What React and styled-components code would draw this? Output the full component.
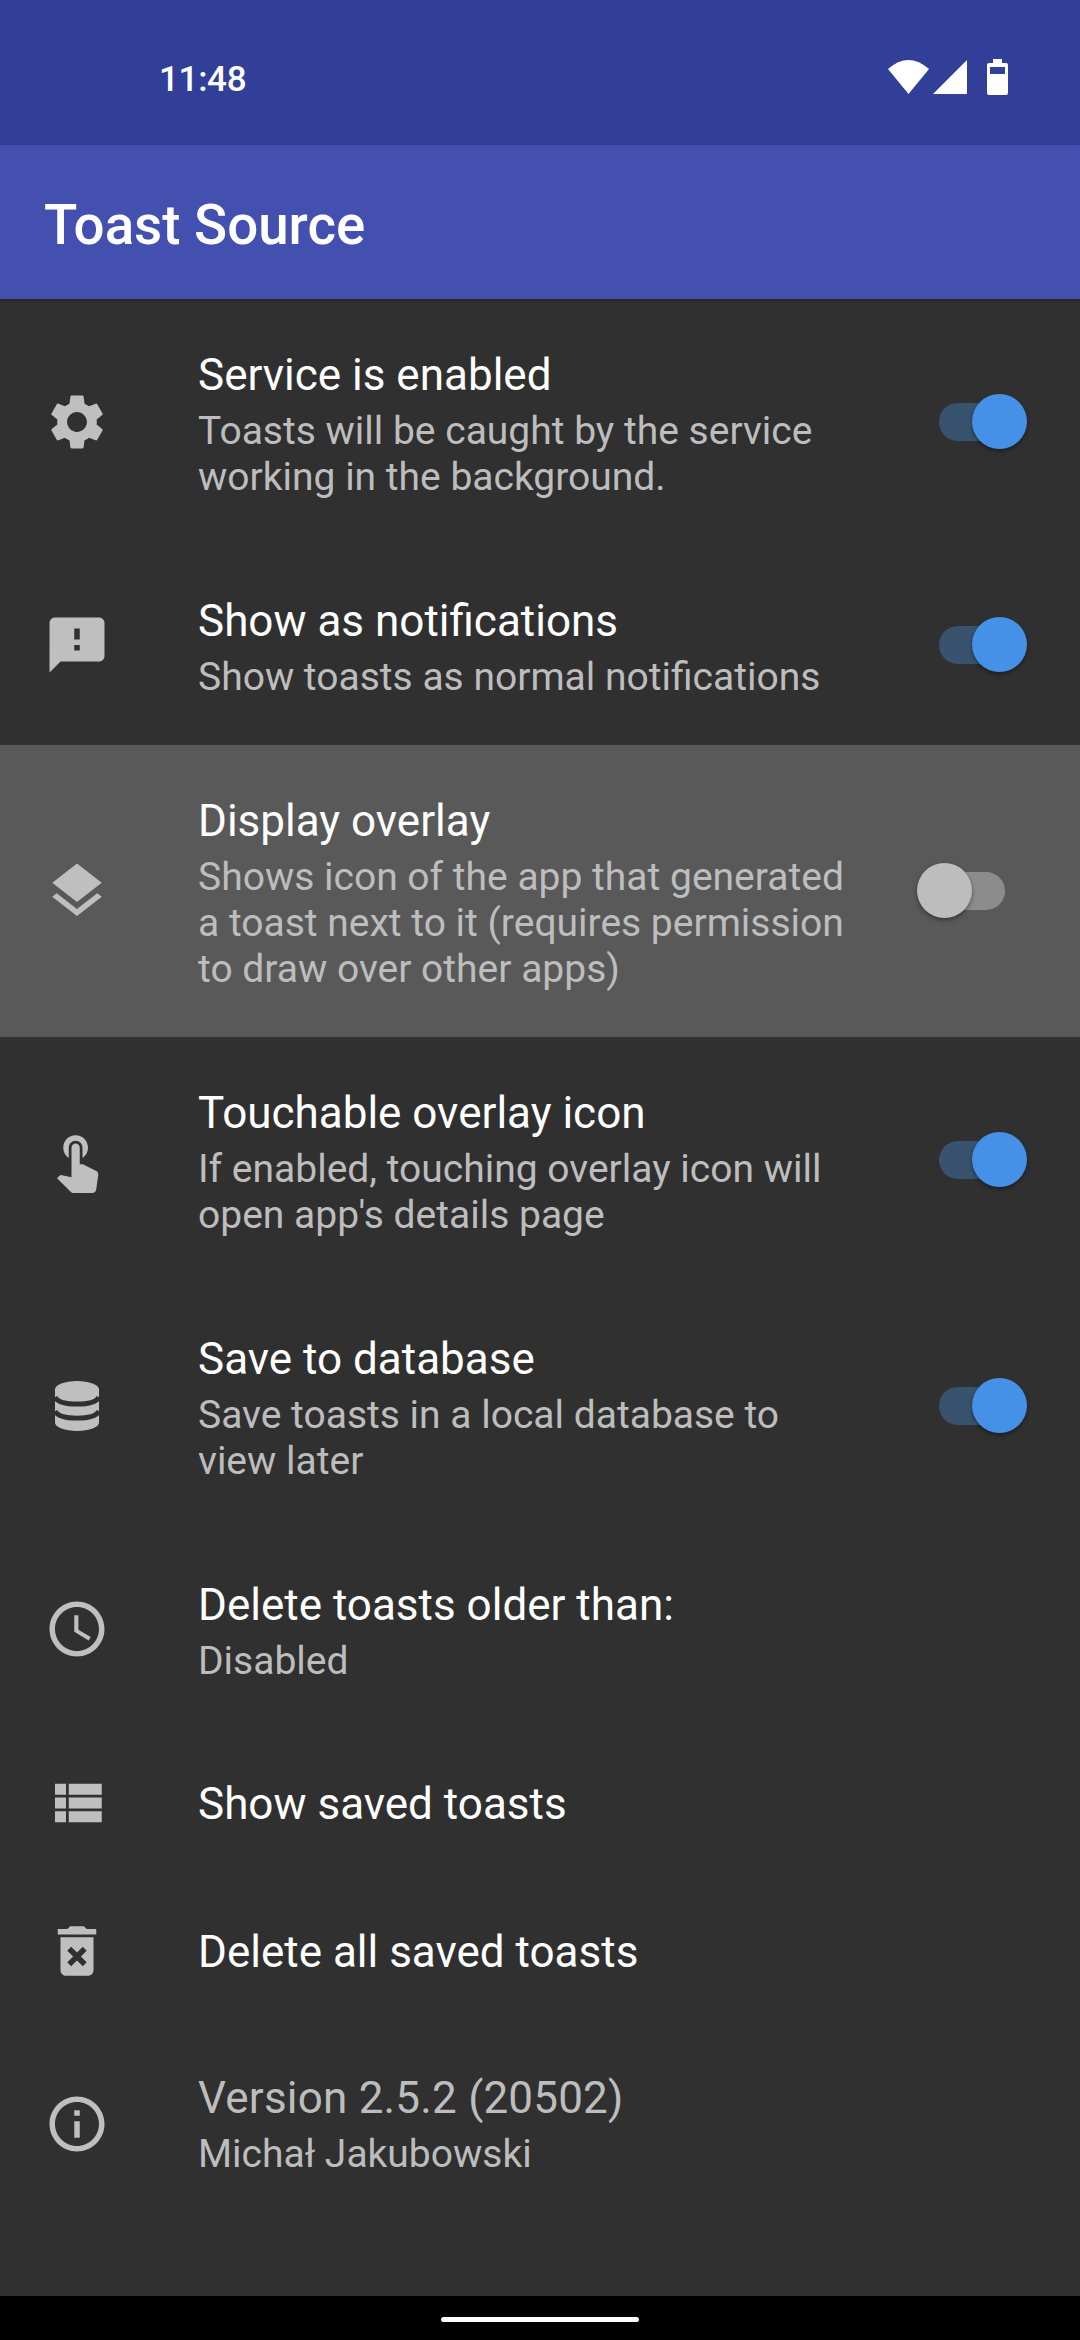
import styled, { createGlobalStyle } from 'styled-components';

const GlobalStyle = createGlobalStyle`
  html, body {
    margin: 0;
    padding: 0;
    background: #303030;
  }
  body {
    font-family: Roboto, "Noto Sans", sans-serif;
  }
`

const Page = styled.div`
  width: 1080px;
  height: 2340px;
  display: flex;
  flex-direction: column;
  background: #303030;
  overflow: hidden;
`
const StatusBar = styled.div`
  height: 145px;
  flex-shrink: 0;
  display: flex;
  align-items: center;
  justify-content: space-between;
  padding: 8px 72px 0 159px;
  box-sizing: border-box;
  background: #323f99;
  color: #fff;
`
const Clock = styled.span`
  font-size: 35px;
  font-weight: 500;
  letter-spacing: -0.3px;
  margin-top: 5px;
`
const StatusIcons = styled.div`
  display: flex;
  align-items: center;
  svg {
    display: block;
    fill: #fff;
  }
`
const AppBar = styled.header`
  height: 154px;
  flex-shrink: 0;
  display: flex;
  align-items: center;
  padding: 5px 0 0 44px;
  box-sizing: border-box;
  background: #4450b0;
  box-shadow: 0 1px 3px rgba(0, 0, 0, 0.25);
  position: relative;
`
const AppTitle = styled.h1`
  margin: 0;
  font-size: 54.7px;
  font-weight: 500;
  color: #fff;
`
const List = styled.main`
  flex: 1;
`
const Row = styled.div`
  display: flex;
  align-items: center;
  min-height: 148px;
  background: ${(p) => (p.$active ? '#595959' : 'transparent')};
`
const IconSlot = styled.div`
  width: 66px;
  height: 66px;
  margin-left: 44px;
  margin-right: 88px;
  flex-shrink: 0;
  svg {
    display: block;
    width: 66px;
    height: 66px;
    fill: #bfbfbf;
  }
`
const Texts = styled.div`
  flex: 1;
  padding: ${(p) => (p.$withSummary ? `${p.$dim ? 42 : 45}px 0 45px` : '2px 0 0')};
`
const Title = styled.div`
  font-size: 44px;
  line-height: 62px;
  letter-spacing: ${(p) => (p.$dim ? '0.2px' : '0')};
  margin-bottom: ${(p) => (p.$withSummary ? '2px' : '0')};
  color: ${(p) => (p.$dim ? '#bdbdbd' : '#fff')};
`
const Summary = styled.div`
  max-width: 655px;
  font-size: 39px;
  line-height: 46px;
  color: #bdbdbd;
`
const SwitchBox = styled.div`
  position: relative;
  width: 110px;
  height: 56px;
  margin-right: 53px;
  flex-shrink: 0;
`
const Track = styled.div`
  position: absolute;
  left: 22px;
  top: 9px;
  width: 66px;
  height: 38px;
  border-radius: 19px;
  background: ${(p) => (p.$on ? '#39536f' : '#8c8c8c')};
`
const Thumb = styled.div`
  position: absolute;
  top: 0;
  left: ${(p) => (p.$on ? '55px' : '0')};
  width: 55px;
  height: 55px;
  border-radius: 50%;
  background: ${(p) => (p.$on ? '#4591e8' : '#bdbdbd')};
  box-shadow: 0 2px 4px rgba(0, 0, 0, 0.4);
`
const NavBar = styled.div`
  height: 44px;
  flex-shrink: 0;
  display: flex;
  justify-content: center;
  padding-top: 21px;
  box-sizing: border-box;
  background: #000;
`
const NavPill = styled.div`
  width: 198px;
  height: 5px;
  border-radius: 3px;
  background: #fff;
`
const WifiIcon = styled.svg`
  margin-right: 4px;
`
const SignalIcon = styled.svg`
  margin-right: 20px;
`

const Icon = ({ d, children }) => (
  <svg viewBox="0 0 24 24">
    {d ? <path d={d} /> : null}
    {children}
  </svg>
)

const icons = {
  settings: <Icon d="M19.14 12.94c.04-.3.06-.61.06-.94 0-.32-.02-.64-.07-.94l2.03-1.58c.18-.14.23-.41.12-.61l-1.92-3.32c-.12-.22-.37-.29-.59-.22l-2.39.96c-.5-.38-1.03-.7-1.62-.94l-.36-2.54c-.04-.24-.24-.41-.48-.41h-3.84c-.24 0-.43.17-.47.41l-.36 2.54c-.59.24-1.13.57-1.62.94l-2.39-.96c-.22-.08-.47 0-.59.22L2.74 8.87c-.12.21-.08.47.12.61l2.03 1.58c-.05.3-.09.63-.09.94s.02.64.07.94l-2.03 1.58c-.18.14-.23.41-.12.61l1.92 3.32c.12.22.37.29.59.22l2.39-.96c.5.38 1.03.7 1.62.94l.36 2.54c.05.24.24.41.48.41h3.84c.24 0 .44-.17.47-.41l.36-2.54c.59-.24 1.13-.56 1.62-.94l2.39.96c.22.08.47 0 .59-.22l1.92-3.32c.12-.22.07-.47-.12-.61l-2.01-1.58zM12 15.6c-1.98 0-3.6-1.62-3.6-3.6s1.62-3.6 3.6-3.6 3.6 1.62 3.6 3.6-1.62 3.6-3.6 3.6z" />,
  feedback: <Icon d="M20 2H4c-1.1 0-1.99.9-1.99 2L2 22l4-4h14c1.1 0 2-.9 2-2V4c0-1.1-.9-2-2-2zm-7 12h-2v-2h2v2zm0-4h-2V6h2v4z" />,
  layers: <Icon d="M11.99 18.54l-7.37-5.73L3 14.07l9 7 9-7-1.63-1.27-7.38 5.74zM12 16l7.36-5.73L21 9l-9-7-9 7 1.63 1.27L12 16z" />,
  touch: <Icon d="M9 11.24V7.5C9 6.12 10.12 5 11.5 5S14 6.12 14 7.5v3.74c1.21-.81 2-2.18 2-3.74C16 5.01 13.99 3 11.5 3S7 5.01 7 7.5c0 1.56.79 2.93 2 3.74zm9.84 4.63l-4.54-2.26c-.17-.07-.35-.11-.54-.11H13v-6c0-.83-.67-1.5-1.5-1.5S10 6.67 10 7.5v10.74l-3.43-.72c-.08-.01-.15-.03-.24-.03-.31 0-.59.13-.79.33l-.79.8 4.94 4.94c.27.27.65.44 1.06.44h6.79c.75 0 1.33-.55 1.44-1.28l.75-5.27c.01-.07.02-.14.02-.2 0-.62-.38-1.16-.91-1.38z" />,
  database: (
    <Icon d="M4 5.9C4 4.3 7.6 2.9 12 2.9S20 4.3 20 5.9V18.1C20 19.7 16.4 21.1 12 21.1S4 19.7 4 18.1Z">
      <path d="M4 8.8C5 10.6 8 11.3 12 11.3S19 10.6 20 8.8M4 13.9C5 15.7 8 16.4 12 16.4S19 15.7 20 13.9" fill="none" stroke="#303030" strokeWidth="1.8" />
    </Icon>
  ),
  clock: <Icon d="M11.99 2C6.47 2 2 6.48 2 12s4.47 10 9.99 10C17.52 22 22 17.52 22 12S17.52 2 11.99 2zM12 20c-4.42 0-8-3.58-8-8s3.58-8 8-8 8 3.58 8 8-3.58 8-8 8zm.5-13H11v6l5.25 3.15.75-1.23-4.5-2.67z" />,
  list: <Icon d="M4 14h4v-4H4v4zm0 5h4v-4H4v4zM4 9h4V5H4v4zm5 5h12v-4H9v4zm0 5h12v-4H9v4zM9 5v4h12V5H9z" />,
  trash: <Icon d="M6 19c0 1.1.9 2 2 2h8c1.1 0 2-.9 2-2V7H6v12zm2.46-7.12l1.41-1.41L12 12.59l2.12-2.12 1.41 1.41L13.41 14l2.12 2.12-1.41 1.41L12 15.41l-2.12 2.12-1.41-1.41L10.59 14l-2.13-2.12zM15.5 4l-1-1h-5l-1 1H5v2h14V4z" />,
  info: <Icon d="M11 7h2v2h-2zm0 4h2v6h-2zm1-9C6.48 2 2 6.48 2 12s4.48 10 10 10 10-4.48 10-10S17.52 2 12 2zm0 18c-4.41 0-8-3.59-8-8s3.59-8 8-8 8 3.59 8 8-3.59 8-8 8z" />,
}

const rows = [
  { icon: 'settings', title: 'Service is enabled', summary: 'Toasts will be caught by the service working in the background.', on: true },
  { icon: 'feedback', title: 'Show as notifications', summary: 'Show toasts as normal notifications', on: true },
  { icon: 'layers', title: 'Display overlay', summary: 'Shows icon of the app that generated a toast next to it (requires permission to draw over other apps)', on: false, active: true },
  { icon: 'touch', title: 'Touchable overlay icon', summary: "If enabled, touching overlay icon will open app's details page", on: true },
  { icon: 'database', title: 'Save to database', summary: 'Save toasts in a local database to view later', on: true },
  { icon: 'clock', title: 'Delete toasts older than:', summary: 'Disabled' },
  { icon: 'list', title: 'Show saved toasts' },
  { icon: 'trash', title: 'Delete all saved toasts' },
  { icon: 'info', title: 'Version 2.5.2 (20502)', summary: 'Michał Jakubowski', dim: true },
]

const Switch = ({ on }) => (
  <SwitchBox>
    <Track $on={on} />
    <Thumb $on={on} />
  </SwitchBox>
)

const App = () => (
  <Page>
    <GlobalStyle />
    <StatusBar>
      <Clock>11:48</Clock>
      <StatusIcons>
        <WifiIcon width="41" height="34" viewBox="0 0 41 34">
          <path d="M0 9Q20.5 -9 41 9L20.5 34Z" />
        </WifiIcon>
        <SignalIcon width="34" height="34" viewBox="0 0 34 34">
          <path d="M34 0V34H0Z" />
        </SignalIcon>
        <svg width="21" height="36" viewBox="0 0 21 36">
          <path d="M6 0H15V4H19Q21 4 21 6V34Q21 36 19 36H2Q0 36 0 34V6Q0 4 2 4H6Z" />
          <rect x="3" y="8" width="15" height="7" fill="#323f99" />
        </svg>
      </StatusIcons>
    </StatusBar>
    <AppBar>
      <AppTitle>Toast Source</AppTitle>
    </AppBar>
    <List>
      {rows.map((row) => (
        <Row key={row.title} $active={row.active}>
          <IconSlot>{icons[row.icon]}</IconSlot>
          <Texts $withSummary={!!row.summary} $dim={row.dim}>
            <Title $dim={row.dim} $withSummary={!!row.summary}>{row.title}</Title>
            {row.summary ? <Summary>{row.summary}</Summary> : null}
          </Texts>
          {row.on !== undefined ? <Switch on={row.on} /> : null}
        </Row>
      ))}
    </List>
    <NavBar>
      <NavPill />
    </NavBar>
  </Page>
)

export default App;
